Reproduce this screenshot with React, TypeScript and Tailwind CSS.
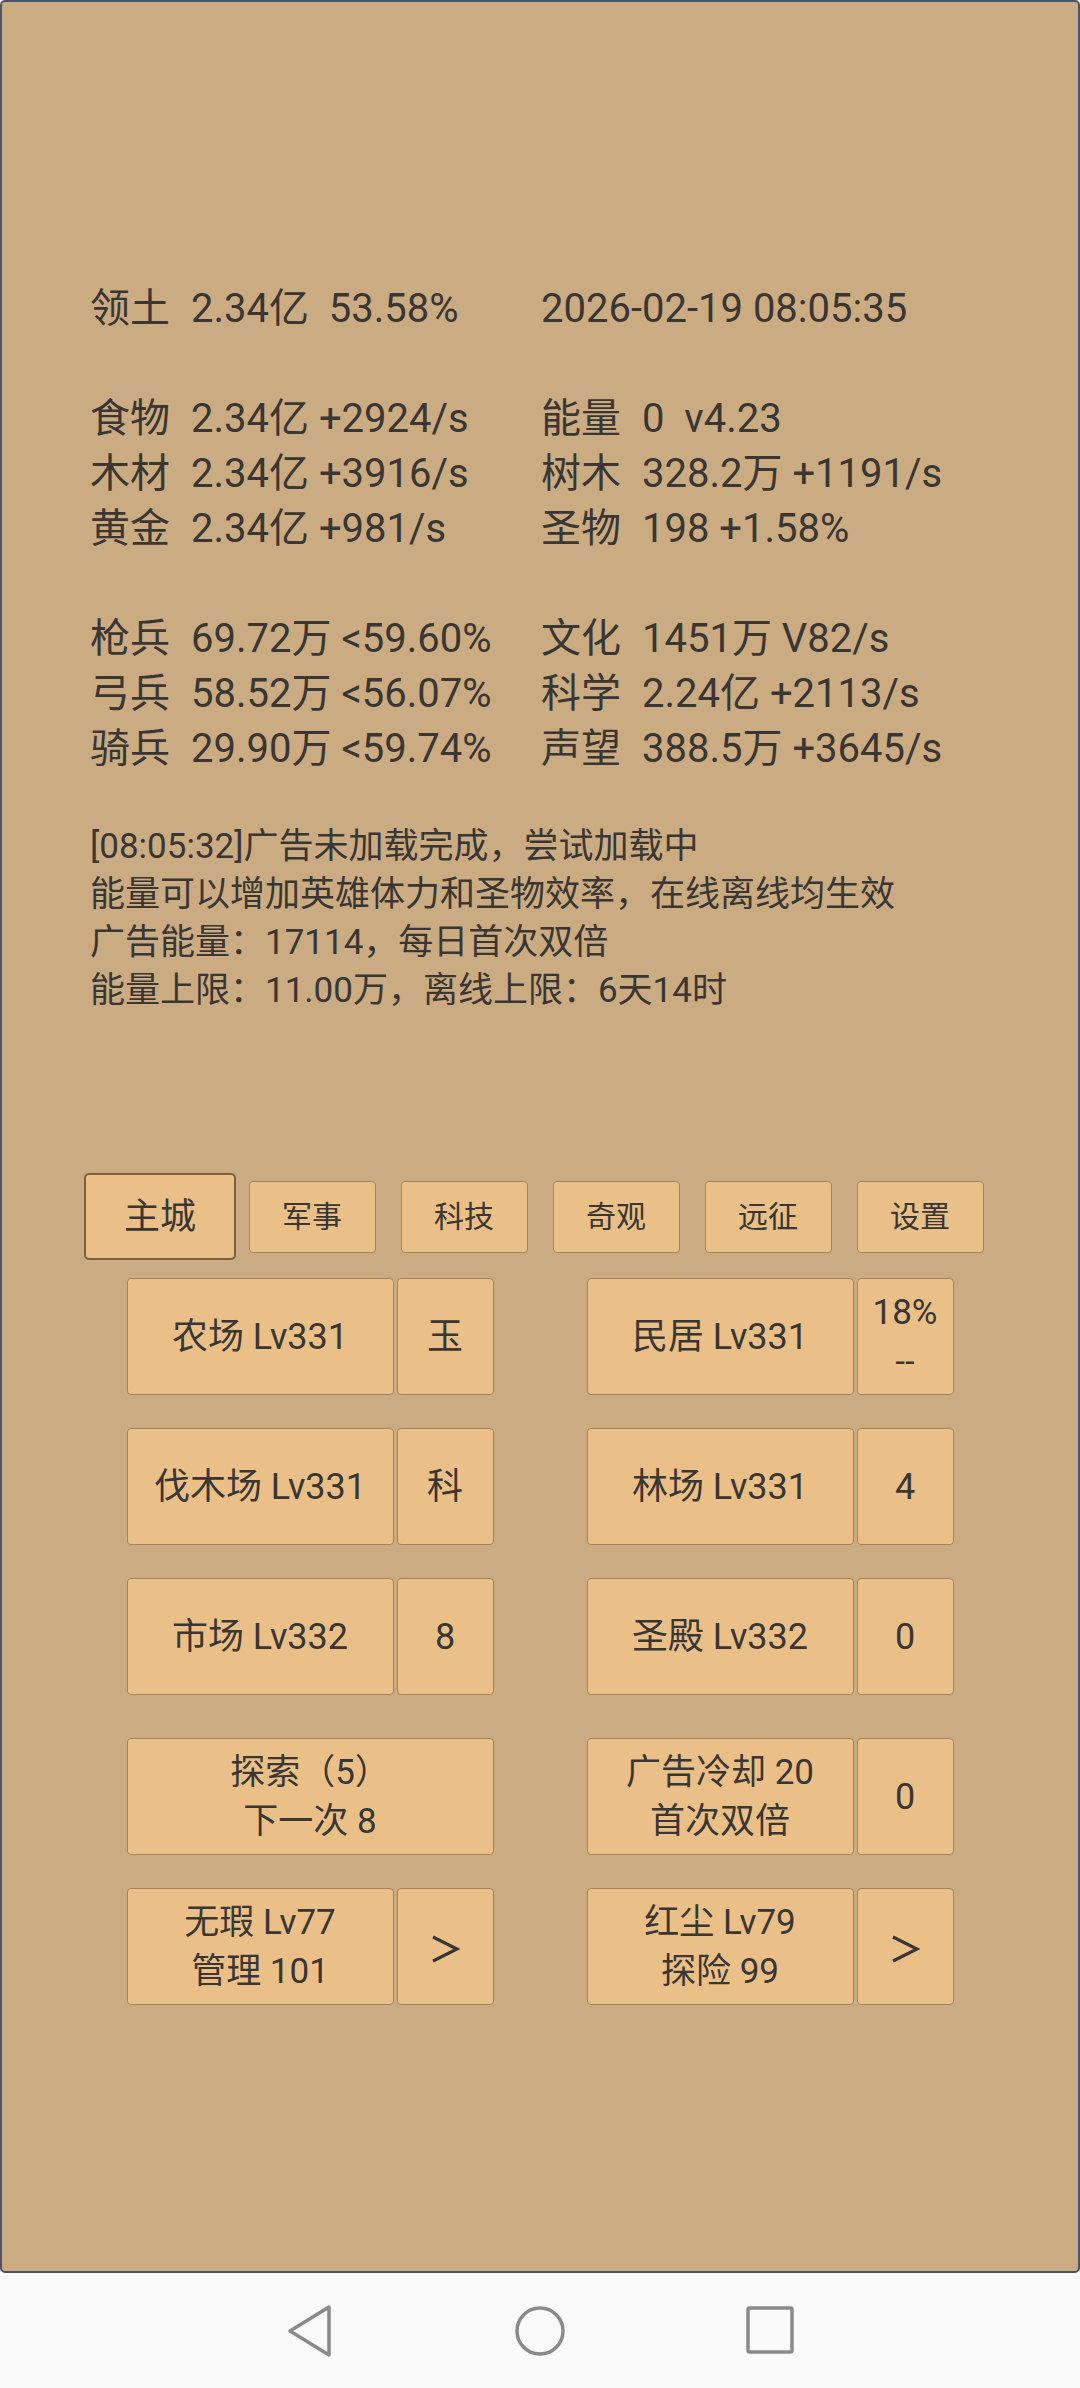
import React from "react";

const StatLine = ({ label, value }: { label: string; value: string }) => (
  <div className="flex h-[55px] items-center">
    <span className="w-[101px] shrink-0">{label}</span>
    <span className="whitespace-pre">{value}</span>
  </div>
);

const Blank = () => <div className="h-[55px]" />;

const Btn = ({
  className = "",
  children,
}: {
  className?: string;
  children: React.ReactNode;
}) => (
  <div
    className={
      "flex flex-col items-center justify-center text-center bg-[#eac088] border border-[#a3845d] rounded-[4px] " +
      className
    }
  >
    {children}
  </div>
);

const Tab = ({ label, active }: { label: string; active?: boolean }) => (
  <div className="w-[152px] h-[87px] flex items-center justify-center">
    {active ? (
      <div className="w-[152px] h-[87px] flex items-center justify-center bg-[#eac088] border-2 border-[#7d6040] rounded-[5px] text-[36px]">
        {label}
      </div>
    ) : (
      <div className="w-[127px] h-[72px] flex items-center justify-center bg-[#eac088] border border-[#a3845d] rounded-[4px] text-[30px]">
        {label}
      </div>
    )}
  </div>
);

const Pair = ({
  main,
  side,
}: {
  main: React.ReactNode;
  side: React.ReactNode;
}) => (
  <div className="flex gap-[3px]">
    <Btn className="w-[267px] h-[117px]">{main}</Btn>
    <Btn className="w-[97px] h-[117px]">{side}</Btn>
  </div>
);

const Chevron = () => (
  <svg width="30" height="30" viewBox="0 0 30 30" className="mt-[4px]">
    <path d="M3 3 L27 15 L3 27" fill="none" stroke="#3a3632" strokeWidth="3.2" strokeLinejoin="miter" />
  </svg>
);

export default function App() {
  return (
    <div className="w-[1080px] h-[2388px] flex flex-col text-[#3a3632] font-['Roboto','Noto_Sans_CJK_SC',sans-serif]">
      <div className="h-[2273px] shrink-0 border-2 border-[#4a5469] rounded-[5px] bg-[#cbab82] pt-[279px]">
        <div className="pl-[88px]">
          <div className="text-[40px] leading-[55px] flex">
            <div className="w-[451px] shrink-0">
              <StatLine label="领土" value="2.34亿  53.58%" />
              <Blank />
              <StatLine label="食物" value="2.34亿 +2924/s" />
              <StatLine label="木材" value="2.34亿 +3916/s" />
              <StatLine label="黄金" value="2.34亿 +981/s" />
              <Blank />
              <StatLine label="枪兵" value="69.72万 <59.60%" />
              <StatLine label="弓兵" value="58.52万 <56.07%" />
              <StatLine label="骑兵" value="29.90万 <59.74%" />
            </div>
            <div>
              <div className="h-[55px] flex items-center whitespace-pre">2026-02-19 08:05:35</div>
              <Blank />
              <StatLine label="能量" value="0  v4.23" />
              <StatLine label="树木" value="328.2万 +1191/s" />
              <StatLine label="圣物" value="198 +1.58%" />
              <Blank />
              <StatLine label="文化" value="1451万 V82/s" />
              <StatLine label="科学" value="2.24亿 +2113/s" />
              <StatLine label="声望" value="388.5万 +3645/s" />
            </div>
          </div>

          <div className="mt-[47px] text-[35px] leading-[48px]">
            <div>[08:05:32]广告未加载完成，尝试加载中</div>
            <div>能量可以增加英雄体力和圣物效率，在线离线均生效</div>
            <div>广告能量：17114，每日首次双倍</div>
            <div>能量上限：11.00万，离线上限：6天14时</div>
          </div>
        </div>

        <div className="mt-[158px] flex justify-center">
          <Tab label="主城" active />
          <Tab label="军事" />
          <Tab label="科技" />
          <Tab label="奇观" />
          <Tab label="远征" />
          <Tab label="设置" />
        </div>

        <div className="mt-[18px] flex flex-col items-center text-[36px]">
          <div className="flex gap-[93px]">
            <Pair main="农场 Lv331" side="玉" />
            <Pair
              main="民居 Lv331"
              side={
                <div className="text-[35px] leading-[49px]">
                  <div>18%</div>
                  <div>--</div>
                </div>
              }
            />
          </div>
          <div className="mt-[33px] flex gap-[93px]">
            <Pair main="伐木场 Lv331" side="科" />
            <Pair main="林场 Lv331" side="4" />
          </div>
          <div className="mt-[33px] flex gap-[93px]">
            <Pair main="市场 Lv332" side="8" />
            <Pair main="圣殿 Lv332" side="0" />
          </div>
          <div className="mt-[43px] flex gap-[93px]">
            <Btn className="w-[367px] h-[117px] text-[35px] leading-[49px]">
              <div>探索（5）</div>
              <div>下一次 8</div>
            </Btn>
            <Pair
              main={
                <div className="text-[35px] leading-[49px]">
                  <div>广告冷却 20</div>
                  <div>首次双倍</div>
                </div>
              }
              side="0"
            />
          </div>
          <div className="mt-[33px] flex gap-[93px]">
            <Pair
              main={
                <div className="text-[35px] leading-[49px]">
                  <div>无瑕 Lv77</div>
                  <div>管理 101</div>
                </div>
              }
              side={<Chevron />}
            />
            <Pair
              main={
                <div className="text-[35px] leading-[49px]">
                  <div>红尘 Lv79</div>
                  <div>探险 99</div>
                </div>
              }
              side={<Chevron />}
            />
          </div>
        </div>
      </div>

      <div className="flex-1 bg-[#fafafa] flex items-center justify-center gap-[178px]">
        <svg width="50" height="54" viewBox="0 0 50 54">
          <path
            d="M44 3 L44 51 L5 27 Z"
            fill="none"
            stroke="#8a8a8a"
            strokeWidth="3.5"
            strokeLinejoin="round"
          />
        </svg>
        <svg width="54" height="54" viewBox="0 0 54 54">
          <circle cx="27" cy="27" r="23" fill="none" stroke="#8a8a8a" strokeWidth="3.5" />
        </svg>
        <svg width="50" height="54" viewBox="0 0 50 54">
          <rect x="3" y="4" width="44" height="44" rx="1.5" fill="none" stroke="#8a8a8a" strokeWidth="3.5" />
        </svg>
      </div>
    </div>
  );
}
